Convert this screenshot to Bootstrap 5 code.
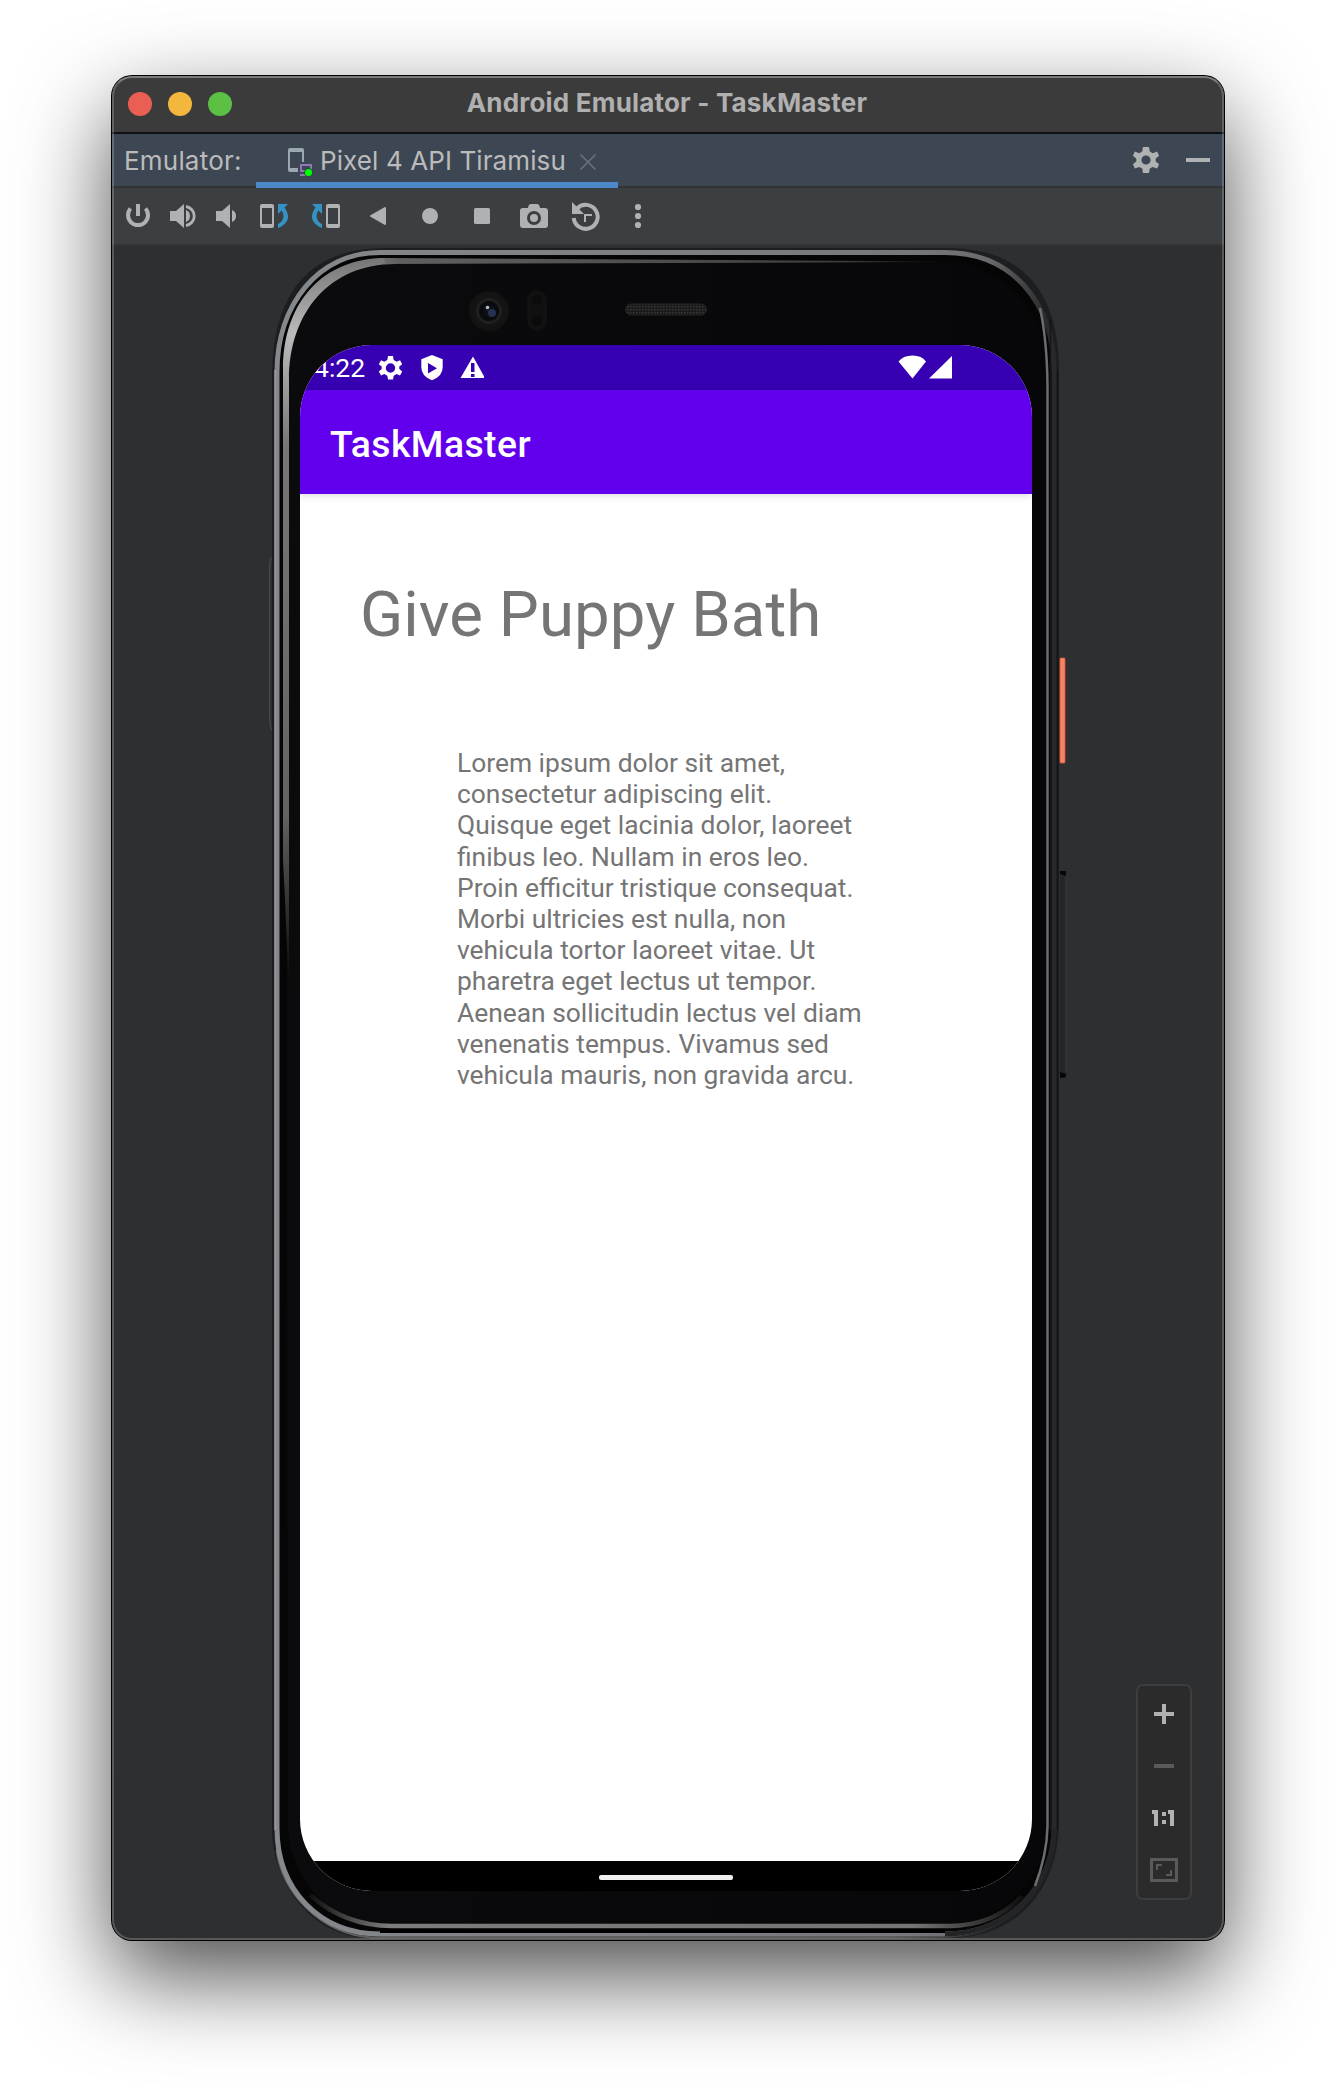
<!DOCTYPE html>
<html lang="en">
<head>
<meta charset="utf-8">
<meta name="viewport" content="width=device-width, initial-scale=1">
<title>Android Emulator - TaskMaster</title>
<link href="https://cdn.jsdelivr.net/npm/bootstrap@5.3.0/dist/css/bootstrap.min.css" rel="stylesheet">
<style>
body{background:#fff;padding:76px 112px 148px;font-family:Inter,"Liberation Sans",sans-serif;height:2088px;overflow:hidden}
.emu-window{width:1112px;height:1864px;border-radius:20px;background:#2e2f31;box-shadow:0 0 0 1px #000,0 36px 92px rgba(0,0,0,.7)}
.emu-window::after{content:"";position:absolute;inset:0;border-radius:20px;border:2px solid rgba(255,255,255,.2);border-top-color:rgba(255,255,255,.33);pointer-events:none;z-index:5}
.emu-title{height:58px;background:#3b3b3b;border-bottom:2px solid #101113;padding-left:16px;border-radius:20px 20px 0 0}
.light{width:24px;height:24px;border-radius:50%}
.light-close{background:#ea5f54}
.light-min{background:#f3b73e}
.light-max{background:#5bc044}
.title-text{left:0;right:2px;top:9px;font-size:26px;line-height:36px;font-weight:700;color:#b0b0b0;letter-spacing:.19px}
.emu-tabs{height:54px;background:#3d4754;border-bottom:2px solid #323234;color:#bbb;font-size:26px;line-height:54px}
.tabs-label{width:144px;padding-left:12px;letter-spacing:.2px;white-space:nowrap}
.emu-tab{width:362px;height:54px;padding-left:28px;border-bottom:6px solid #4a88c7;line-height:54px;white-space:nowrap}
.tab-name{width:258px;letter-spacing:.1px}
.emu-tools{height:58px;background:#3c3f41;border-bottom:2px solid #333;padding-left:4px}
.emu-tools svg,.emu-tabs svg,.zoom-panel svg,.status-bar svg{display:block;flex:none}
.stage{height:1694px;overflow:hidden;border-radius:0 0 20px 20px}
.phone-art{left:148px;top:0;z-index:0}
.phone-screen{width:732px;height:1546px;margin-left:188px;margin-top:99px;border-radius:72px;background:#fff;overflow:hidden;font-family:Roboto,"Liberation Sans",sans-serif;z-index:1}
.status-bar{height:45px;background:#3700b3;color:#fff;font-size:26.5px;line-height:47px;padding-left:14px}
.clock{width:50px;white-space:nowrap}
.app-bar{height:104px;background:#6200ee;color:#fff;font-size:37.3px;font-weight:500;padding-left:30px;line-height:109px;letter-spacing:.45px;box-shadow:0 1px 8px rgba(0,0,0,.16)}
.task-title{font-size:63.5px;line-height:76px;color:#757575;margin:83px 0 0 60px;white-space:nowrap;font-weight:400;letter-spacing:.08px}
.task-body{font-size:26.38px;line-height:31.2px;color:#757575;margin:95px 0 0 157px;white-space:nowrap}
.nav-strip{height:30px;background:#000;padding-top:14px}
.nav-pill{width:134px;height:5px;background:#eee;border-radius:2px}
.zoom-panel{right:32px;bottom:40px;width:56px;height:216px;background:#2b2b2b;border:2px solid #3c3d3f;border-radius:7px}
</style>
<script src="https://cdn.jsdelivr.net/npm/bootstrap@5.3.0/dist/js/bootstrap.bundle.min.js"></script>
</head>
<body>
<main class="emu-window position-relative d-flex flex-column">
  <header class="emu-title d-flex align-items-center gap-3 position-relative">
    <span class="light light-close"></span>
    <span class="light light-min"></span>
    <span class="light light-max"></span>
    <div class="title-text position-absolute text-center">Android Emulator - TaskMaster</div>
  </header>

  <nav class="emu-tabs d-flex">
    <div class="tabs-label">Emulator:</div>
    <div class="emu-tab d-flex">
      <svg width="36" height="48" viewBox="284 134 36 48"><path fill-rule="evenodd" d="M290 148h12a2 2 0 0 1 2 2v12h-2v-10h-12v16h8v4h-8a2 2 0 0 1-2-2v-20a2 2 0 0 1 2-2z" fill="#9aa7b0"/><path d="M301 171v-6h10v6zM300 175h8" fill="none" stroke="#9175b5" stroke-width="2"/><circle cx="308.5" cy="172.5" r="4.4" fill="#244a3c"/><circle cx="308.5" cy="172.5" r="3.5" fill="#00ff00"/></svg>
      <span class="tab-name">Pixel 4 API Tiramisu</span>
      <svg width="20" height="48" viewBox="578 134 20 48"><path d="M580.500 154.500l15 15m0-15l-15 15" stroke="#66717b" stroke-width="1.700"/></svg>
    </div>
    <svg class="ms-auto" width="100" height="52" viewBox="1124 134 100 52" fill="#afb1b3"><g transform="translate(1146 160)"><path fill-rule="evenodd" d="M-3-13h6l.8 4.500 3 1.700 4.300-1.600 2 4.200-3.400 2.700v3l3.400 2.800-2 4.200-4.300-1.600-3 1.700-.8 4.400h-6l-.8-4.400-3-1.700-4.300 1.600-2-4.200 3.400-2.800v-3l-3.400-2.700 2-4.200 4.300 1.600 3-1.700zM0-4.600a4.600 4.600 0 1 0 0 9.200 4.600 4.600 0 0 0 0-9.200z"/></g><path d="M1186 158h24v4h-24z"/></svg>
  </nav>

  <div class="emu-tools d-flex align-items-center">
    <svg width="44" height="32" viewBox="116 200 44 32"><path d="M130.500 208.500a10 10 0 1 0 15 0" fill="none" stroke="#afb1b3" stroke-width="4"/><path d="M136 204h4v12h-4z" fill="#afb1b3"/></svg>
    <svg width="46" height="32" viewBox="160 200 46 32"><path d="M170 211h6l8-7v24l-8-7h-6z" fill="#afb1b3"/><path d="M186 210q4 1.500 4 6t-4 6z" fill="#afb1b3"/><path d="M186 206.500a9.600 9.600 0 0 1 0 19" fill="none" stroke="#afb1b3" stroke-width="2.800"/></svg>
    <svg width="42" height="32" viewBox="206 200 42 32"><path d="M216 211h6l8-7v24l-8-7h-6z" fill="#afb1b3"/><path d="M232 210q4 1.500 4 6t-4 6z" fill="#afb1b3"/></svg>
    <svg width="52" height="32" viewBox="248 200 52 32"><path fill-rule="evenodd" d="M262 204h10a2 2 0 0 1 2 2v20a2 2 0 0 1-2 2h-10a2 2 0 0 1-2-2v-20a2 2 0 0 1 2-2zm0 4v16h10v-16z" fill="#afb1b3"/><path d="M278 204h10l-3.500 3.500q7 10 0 16.500-3 3-6.500 4v-4q5-2 5.500-8 0-3-2-5.500L278 214z" fill="#3592c4"/></svg>
    <svg width="52" height="32" viewBox="300 200 52 32"><path fill-rule="evenodd" d="M328 204h10a2 2 0 0 1 2 2v20a2 2 0 0 1-2 2h-10a2 2 0 0 1-2-2v-20a2 2 0 0 1 2-2zm0 4v16h10v-16z" fill="#afb1b3"/><path d="M322 204h-10l3.500 3.500q-7 10 0 16.500 3 3 6.500 4v-4q-5-2-5.500-8 0-3 2-5.500L322 214z" fill="#3592c4"/></svg>
    <svg width="52" height="32" viewBox="352 200 52 32"><path d="M371 216l14-8v16z" fill="#afb1b3" stroke="#afb1b3" stroke-width="2" stroke-linejoin="round"/></svg>
    <svg width="52" height="32" viewBox="404 200 52 32"><circle cx="430" cy="216" r="8" fill="#afb1b3"/></svg>
    <svg width="52" height="32" viewBox="456 200 52 32"><rect x="474" y="208" width="16" height="16" rx="1.500" fill="#afb1b3"/></svg>
    <svg width="52" height="32" viewBox="508 200 52 32"><path fill-rule="evenodd" d="M523 208h5q.5-4 3-4h6q2.500 0 3 4h5q3 0 3 3v14q0 3-3 3h-22q-3 0-3-3v-14q0-3 3-3zm11 3a7 7 0 1 0 0 14 7 7 0 0 0 0-14z" fill="#afb1b3"/><circle cx="534" cy="218" r="4" fill="#afb1b3"/></svg>
    <svg width="52" height="32" viewBox="560 200 52 32"><path d="M577 208.500a12 12 0 1 1-3.300 9.500" fill="none" stroke="#afb1b3" stroke-width="4"/><path d="M572 202l4.500 4.500 7.500 7.500h-12z" fill="#afb1b3"/><path d="M592 215h-7v7" fill="none" stroke="#afb1b3" stroke-width="2"/></svg>
    <svg width="52" height="32" viewBox="612 200 52 32" fill="#afb1b3"><circle cx="638" cy="207" r="3.100"/><circle cx="638" cy="216" r="3.100"/><circle cx="638" cy="225" r="3.100"/></svg>
  </div>

  <section class="stage position-relative d-flex align-items-start">
    <svg class="phone-art position-absolute" width="820" height="1694" viewBox="260 246 820 1694">
      <defs>
        <linearGradient id="rim" gradientUnits="userSpaceOnUse" x1="260" y1="0" x2="1070" y2="0"><stop offset="0" stop-color="#85888c"/><stop offset=".8" stop-color="#77787c"/><stop offset=".9" stop-color="#6a6a6d"/><stop offset=".97" stop-color="#2a2b2c"/><stop offset="1" stop-color="#242526"/></linearGradient>
        <linearGradient id="stripL" gradientUnits="userSpaceOnUse" x1="0" y1="260" x2="0" y2="1000"><stop offset="0" stop-color="#777"/><stop offset=".1" stop-color="#bbb"/><stop offset=".25" stop-color="#777"/><stop offset=".75" stop-color="#626262"/><stop offset="1" stop-color="#000"/></linearGradient>
        <linearGradient id="stripT" gradientUnits="userSpaceOnUse" x1="288" y1="0" x2="940" y2="0"><stop offset="0" stop-color="#bdbdbd"/><stop offset=".17" stop-color="#606060"/><stop offset=".6" stop-color="#4c4c4c"/><stop offset=".85" stop-color="#3c3c3c"/><stop offset="1" stop-color="#0a0a0a"/></linearGradient>
        <linearGradient id="stripB" gradientUnits="userSpaceOnUse" x1="310" y1="0" x2="1020" y2="0"><stop offset="0" stop-color="#111"/><stop offset=".11" stop-color="#7c7c7c"/><stop offset=".85" stop-color="#757575"/><stop offset="1" stop-color="#111"/></linearGradient>
        <linearGradient id="edgeB" gradientUnits="userSpaceOnUse" x1="270" y1="0" x2="1000" y2="0"><stop offset="0" stop-color="#5c5e60"/><stop offset=".85" stop-color="#5c5e60"/><stop offset="1" stop-color="#1d1e20"/></linearGradient>
        <linearGradient id="face" x1="0" y1="0" x2="1" y2="0"><stop offset="0" stop-color="#0b0b0d"/><stop offset="1" stop-color="#070709"/></linearGradient>
        <radialGradient id="lens" cx=".5" cy=".5" r=".5"><stop offset="0" stop-color="#111622"/><stop offset=".45" stop-color="#09090b"/><stop offset=".58" stop-color="#242526"/><stop offset=".66" stop-color="#151516"/><stop offset="1" stop-color="#121213"/></radialGradient>
        <pattern id="mesh" width="3" height="3" patternUnits="userSpaceOnUse"><rect width="3" height="3" fill="#1b1b1b"/><rect width="1.500" height="1.500" fill="#363636"/></pattern>
      </defs>
      <!-- body, outer rim -->
      <path d="M382 248H950Q1058 250 1059 370V1825C1058 1880 1025 1938 950 1938H370C310 1938 272 1880 272 1830V370Q276 250 382 248z" fill="#1d1e20"/>
      <path d="M372 1937.500C320 1934 282 1892 276.500 1850M372 1937.500H940Q975 1936 995 1927" fill="none" stroke="url(#edgeB)" stroke-width="2"/>
      <path d="M380 252.500H945C1010 252.500 1054 300 1054 372V1828C1054 1885 1010 1934 945 1934H380C320 1934 277 1890 277 1828V372C277 305 318 252.500 380 252.500z" fill="#050506" stroke="url(#rim)" stroke-width="5"/>
      <path d="M1054 1828C1054 1885 1010 1934 945 1934" fill="none" stroke="#232426" stroke-width="5"/>
      <path d="M275 370V1830" stroke="#aaacae" stroke-width="1"/>
      <path d="M380 1930.500H945" stroke="#000" stroke-width="5"/>
      <path d="M286 370C286 308 322 261 382 261H938C990 261 1047 300 1047 372V1824C1045 1880 1000 1925.500 940 1925.500H388C330 1925.500 290 1880 288 1824z" fill="url(#face)"/>
      <!-- inner highlights -->
      <path d="M283 860V370C283 300 325 258 385 258L395 264C330 264 289 312 289 380V1000L285 900z" fill="url(#stripL)"/>
      <path d="M384 258L945 261.500V262L385 264z" fill="url(#stripT)"/>
      <path d="M1040 308Q1047 340 1047.500 385V1826Q1047 1855 1035 1886" fill="none" stroke="#6c6d6f" stroke-width="2.500"/>
      <path d="M1050.500 320V1830M1057.500 370V1830" stroke="#151617" stroke-width="1.500"/>
      <path d="M310 1895Q345 1926 392 1926H950Q995 1925 1022 1896" fill="none" stroke="url(#stripB)" stroke-width="4.500"/>
      <!-- cameras, proximity sensor, speaker -->
      <circle cx="489" cy="311" r="20" fill="url(#lens)"/><circle cx="492" cy="313" r="4" fill="#26324f"/><circle cx="487.500" cy="307.500" r="1.800" fill="#b8b8c0"/>
      <rect x="528" y="291" width="18" height="39" rx="9" fill="#101011" stroke="#161617"/><circle cx="537" cy="300" r="6" fill="#0b0b0c" stroke="#151516"/><circle cx="537" cy="321" r="6" fill="#0b0b0c" stroke="#151516"/>
      <rect x="625.500" y="304" width="81" height="11" rx="5.500" fill="url(#mesh)" stroke="#242424"/>
      <!-- side buttons -->
      <path d="M272 557q-2.500 2-2.500 12v145q0 12 2.500 16" fill="none" stroke="#4a4d4f" stroke-width="1"/>
      <rect x="1060" y="658" width="5" height="105" rx="1" fill="#f58467" stroke="#d9573b" stroke-width=".8"/>
      <rect x="1060" y="871" width="6" height="207" rx="1" fill="#252627"/><path d="M1060 871h6v5l-6-2zM1060 1078v-6l6 2v3z" fill="#070707"/><path d="M1066 876v196" stroke="#3a3b3b"/>
    </svg>

    <article class="phone-screen position-relative d-flex flex-column">
      <div class="status-bar d-flex align-items-center">
        <span class="clock">4:22</span>
        <svg width="120" height="45" viewBox="364 345 120 45" fill="#fff"><g transform="translate(390.500 368)"><path fill-rule="evenodd" d="M-2.500-12h5l.7 4 3 1.700 3.300-1.500 2.200 4-2.900 2.400v2.500l2.900 2.400-2.200 4-3.300-1.500-3 1.700-.7 3.700h-5l-.7-3.700-3-1.700-3.300 1.500-2.200-4 2.900-2.400v-2.500l-2.900-2.400 2.200-4 3.300 1.500 3-1.700zM0-4.700a4.700 4.700 0 1 0 0 9.400 4.700 4.700 0 0 0 0-9.400z"/></g><path fill-rule="evenodd" d="M432 355l10.700 4.200v8q0 9-10.700 13-10.700-4-10.700-13v-8zm-4 8v10.500l9-5.200z"/><path fill-rule="evenodd" d="M473 356.500l12 21.500h-24.500zM471 363v9h3.500v-9zm0 11v3h3.500v-3z"/></svg>
        <svg class="ms-auto" width="134" height="45" viewBox="898 345 134 45" fill="#fff"><path d="M898.500 361.500Q903 355.500 912.500 355.500T926 361.500L912.500 378.500zM952 356v22.500h-23z"/></svg>
      </div>
      <div class="app-bar position-relative">TaskMaster</div>
      <h1 class="task-title">Give Puppy Bath</h1>
      <p class="task-body">Lorem ipsum dolor sit amet,<br>consectetur adipiscing elit.<br>Quisque eget lacinia dolor, laoreet<br>finibus leo. Nullam in eros leo.<br>Proin efficitur tristique consequat.<br>Morbi ultricies est nulla, non<br>vehicula tortor laoreet vitae. Ut<br>pharetra eget lectus ut tempor.<br>Aenean sollicitudin lectus vel diam<br>venenatis tempus. Vivamus sed<br>vehicula mauris, non gravida arcu.</p>
      <div class="nav-strip mt-auto d-flex justify-content-center align-items-start"><div class="nav-pill"></div></div>
    </article>

    <aside class="zoom-panel position-absolute">
      <svg width="52" height="212" viewBox="1138 1686 52 212"><path d="M1154 1712h8v-8h4v8h8v4h-8v8h-4v-8h-8z" fill="#afb1b3"/><path d="M1154 1764h20v4h-20z" fill="#5a5a5a"/><path d="M1152 1810h6v16h-4v-12h-2zM1162 1812h4v4h-4zm0 8h4v4h-4zM1168 1810h6v16h-4v-12h-2z" fill="#afb1b3"/><path d="M1151.500 1859.500h25v21h-25z" fill="none" stroke="#5a5a5a" stroke-width="3"/><path d="M1157 1870v-5h5M1166 1875h5v-5" fill="none" stroke="#5a5a5a" stroke-width="2"/></svg>
    </aside>
  </section>
</main>
</body>
</html>
